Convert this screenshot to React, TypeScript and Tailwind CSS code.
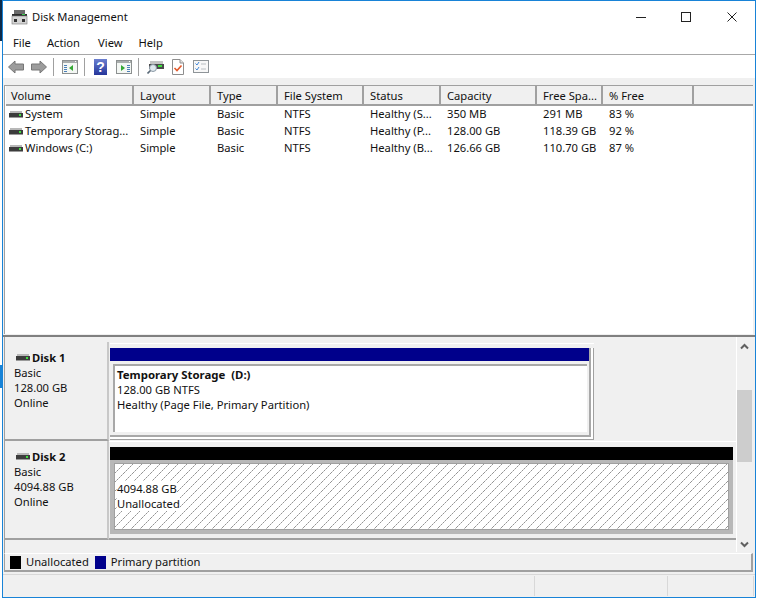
import type { ReactNode } from "react";

// small hard disk glyph used in the list and the disk labels
function DiskIcon({ className = "" }: { className?: string }) {
  return (
    <svg width="14" height="7" viewBox="0 0 14 7" className={className}>
      <rect x="1" y="0" width="12" height="2" fill="#b8b8b8" />
      <rect x="0" y="2" width="14" height="4" fill="#3c3c3c" />
      <rect x="0" y="6" width="14" height="1" fill="#9a9a9a" />
      <rect x="10" y="3" width="2" height="2" fill="#3ee03e" />
    </svg>
  );
}

function AppIcon() {
  return (
    <svg width="17" height="15" viewBox="0 0 17 15">
      <rect x="3" y="0" width="11" height="4" fill="#6a6a6a" />
      <rect x="1" y="4" width="15" height="2" fill="#2c2c2c" />
      <rect x="11" y="4" width="3" height="1" fill="#35d04a" />
      <rect x="1" y="6" width="15" height="8" fill="#d4d4d4" stroke="#777" strokeWidth="0.6" />
      <rect x="3" y="9" width="3" height="3" fill="#333" />
      <rect x="11" y="9" width="3" height="3" fill="#333" />
    </svg>
  );
}

function ArrowIcon({ flip = false }: { flip?: boolean }) {
  return (
    <svg width="16" height="14" viewBox="0 0 16 14" className={flip ? "-scale-x-100" : ""}>
      <path d="M0.5 7 L7 1 V4 H15.5 V10 H7 V13 Z" fill="#9c9c9c" stroke="#777" />
    </svg>
  );
}

function PaneIcon({ right = false }: { right?: boolean }) {
  return (
    <svg width="16" height="14" viewBox="0 0 16 14">
      <rect x="0.5" y="0.5" width="15" height="13" fill="#f4f7f4" stroke="#8c9090" />
      <rect x="1" y="1" width="14" height="2" fill="#a9adad" />
      <rect x="13" y="1" width="1" height="1" fill="#fff" />
      <rect x={right ? 11 : 2} y="5" width="3" height="1" fill="#4a7fb8" />
      <rect x={right ? 11 : 2} y="7" width="3" height="1" fill="#4a7fb8" />
      <rect x={right ? 11 : 2} y="9" width="3" height="1" fill="#4a7fb8" />
      <rect x={right ? 11 : 2} y="11" width="3" height="1" fill="#4a7fb8" />
      <path d={right ? "M5 5 L9 8 L5 11 Z" : "M11 5 L7 8 L11 11 Z"} fill="#35a835" />
    </svg>
  );
}

function HelpIcon() {
  return (
    <div className="flex h-[16px] w-[13px] items-center justify-center bg-gradient-to-b from-[#6c7fd0] to-[#26349a] font-['Liberation_Sans',sans-serif] text-[14px] leading-none font-bold text-white">
      ?
    </div>
  );
}

function ScanIcon() {
  return (
    <svg width="17" height="15" viewBox="0 0 17 15">
      <rect x="3" y="2" width="13" height="3" fill="#c4c4c4" />
      <rect x="2" y="5" width="15" height="5" fill="#4a4a4a" />
      <rect x="11" y="6" width="4" height="2" fill="#3ee03e" />
      <circle cx="6" cy="9" r="3.5" fill="#dfe8ee" stroke="#8a98a4" />
      <path d="M3.5 11.5 L0.5 14.5" stroke="#5a6a78" strokeWidth="1.6" />
    </svg>
  );
}

function TaskIcon() {
  return (
    <svg width="12" height="16" viewBox="0 0 12 16">
      <path d="M0.5 0.5 H8 L11.5 4 V15.5 H0.5 Z" fill="#fff" stroke="#8e8e8e" />
      <path d="M8 0.5 V4 H11.5" fill="#e4e4e4" stroke="#8e8e8e" />
      <path d="M2.5 9 L5 11.5 L9.5 6.5" fill="none" stroke="#e2592b" strokeWidth="1.6" />
    </svg>
  );
}

function ChecklistIcon() {
  return (
    <svg width="16" height="13" viewBox="0 0 16 13">
      <rect x="0.5" y="0.5" width="15" height="12" fill="#f7f7f7" stroke="#8e9498" />
      <path d="M2.5 3.5 L4 5 L6 2" fill="none" stroke="#3f86d8" />
      <path d="M2.5 8.5 L4 10 L6 7" fill="none" stroke="#3f86d8" />
      <path d="M8 4 H13 M8 9 H13" stroke="#b9bec2" />
    </svg>
  );
}

function Sep() {
  return <div className="h-[18px] w-px bg-[#a0a0a0]" />;
}

function HeaderCell({ label, width, first }: { label: string; width: string; first: boolean }) {
  return (
    <div className={`${width} flex h-full shrink-0 items-center border-r-2 border-b-2 border-[#a0a0a0] pt-[2px] ${first ? "pl-[5px]" : "pl-[6px]"} whitespace-nowrap`}>
      {label}
    </div>
  );
}

const rows = [
  ["System", "Simple", "Basic", "NTFS", "Healthy (S...", "350 MB", "291 MB", "83 %"],
  ["Temporary Storag...", "Simple", "Basic", "NTFS", "Healthy (P...", "128.00 GB", "118.39 GB", "92 %"],
  ["Windows (C:)", "Simple", "Basic", "NTFS", "Healthy (B...", "126.66 GB", "110.70 GB", "87 %"],
];

const cols = ["w-[128px]", "w-[77px]", "w-[67px]", "w-[86px]", "w-[77px]", "w-[96px]", "w-[66px]", "w-[91px]"];
const heads = ["Volume", "Layout", "Type", "File System", "Status", "Capacity", "Free Spa...", "% Free"];

function DiskLabel({ name, size }: { name: string; size: string }) {
  return (
    <div className="h-[99px] w-[104px] shrink-0 border-r-2 border-b-2 border-r-[#c8c8c8] border-b-[#a0a0a0] pt-[8px] pl-[9px] leading-[15px]">
      <div className="ml-[2px] flex items-center gap-[2px] font-bold">
        <DiskIcon />
        <span>{name}</span>
      </div>
      <div>Basic</div>
      <div>{size}</div>
      <div>Online</div>
    </div>
  );
}

function LegendSwatch({ color, children }: { color: string; children: ReactNode }) {
  return (
    <div className="flex items-center gap-[5px]">
      <div className={`h-[13px] w-[11px] ${color}`} />
      <span>{children}</span>
    </div>
  );
}

export default function App() {
  return (
    <div className="flex h-[598px] w-[757px] bg-white font-['Noto_Sans',sans-serif] text-[11.2px] text-[#111]">
      {/* desktop showing behind the window */}
      <div className="flex w-[2px] shrink-0 flex-col">
        <div className="h-[41px] bg-[#0c2a4a]" />
        <div className="h-[324px]" />
        <div className="h-[23px] bg-[#1883d7]" />
      </div>

      <div className="flex h-full w-[754px] shrink-0 flex-col overflow-hidden border border-[#1883d7] bg-[#f0f0f0]">
        {/* Title bar */}
        <div className="flex h-[32px] shrink-0 items-center bg-white pl-[8px]">
          <AppIcon />
          <span className="ml-[4px]">Disk Management</span>
          <div className="ml-auto flex items-center pr-[18px]">
            <div className="h-px w-[10px] bg-[#222]" />
            <div className="ml-[35px] h-[10px] w-[10px] border border-[#222]" />
            <svg width="10" height="10" viewBox="0 0 10 10" className="ml-[36px]">
              <path d="M0.5 0.5 L9.5 9.5 M9.5 0.5 L0.5 9.5" stroke="#222" />
            </svg>
          </div>
        </div>

        {/* Menu bar */}
        <div className="flex h-[22px] shrink-0 items-center gap-[16px] border-b border-[#a8a8a8] bg-white pl-[10px]">
          <span>File</span>
          <span className="mr-[2px]">Action</span>
          <span>View</span>
          <span>Help</span>
        </div>

        {/* Toolbar */}
        <div className="flex h-[23px] shrink-0 items-center bg-white pl-[5px]">
          <ArrowIcon />
          <div className="ml-[7px]"><ArrowIcon flip /></div>
          <div className="ml-[6px]"><Sep /></div>
          <div className="ml-[8px]"><PaneIcon /></div>
          <div className="ml-[6px]"><Sep /></div>
          <div className="ml-[9px]"><HelpIcon /></div>
          <div className="ml-[9px]"><PaneIcon right /></div>
          <div className="ml-[6px]"><Sep /></div>
          <div className="ml-[8px]"><ScanIcon /></div>
          <div className="ml-[8px]"><TaskIcon /></div>
          <div className="ml-[9px]"><ChecklistIcon /></div>
        </div>

        {/* Volume list */}
        <div className="flex h-[256px] shrink-0 flex-col pt-[7px] pr-[2px] pl-[1px]">
          <div className="flex-1 border-t border-l border-[#a0a0a0] bg-white pl-px">
            <div className="flex h-[20px] bg-[#f0f0f0]">
              {heads.map((h, i) => (
                <HeaderCell key={h} label={h} width={cols[i]} first={i === 0} />
              ))}
              <div className="flex-1 border-b-2 border-[#a0a0a0]" />
            </div>
            <div>
              {rows.map((r) => (
                <div key={r[0]} className="flex h-[17px] items-center whitespace-nowrap">
                  {r.map((c, i) => (
                    <div key={i} className={`${cols[i]} flex shrink-0 items-center ${i === 0 ? "pl-[3px]" : "pl-[6px]"}`}>
                      {i === 0 && <DiskIcon className="mr-[2px] shrink-0" />}
                      {c}
                    </div>
                  ))}
                </div>
              ))}
            </div>
          </div>
        </div>

        {/* Splitter */}
        <div className="h-[3px] shrink-0 border-b-2 border-[#808080]" />

        {/* Disk map */}
        <div className="flex h-[216px] shrink-0 pr-[3px] pl-[1px]">
          <div className="flex w-[732px] shrink-0 flex-col border-l border-[#a0a0a0]">
            <div className="flex h-[104px] shrink-0 pt-[5px]">
              <DiskLabel name="Disk 1" size="128.00 GB" />
              <div className="flex-1 pt-px pl-px">
                <div className="w-[484px] border-t border-white pt-[4px]">
                  <div className="h-[92px] border-r border-b border-[#a0a0a0]">
                    <div className="h-full border-r-2 border-b-2 border-white">
                      <div className="h-full border-r-2 border-b-2 border-[#a8a8a8]">
                        <div className="h-[13px] bg-[#00008b]" />
                        <div className="mt-[3px] ml-[3px] h-[68px] w-[474px] border-t-2 border-l-2 border-[#a8a8a8] bg-white pt-px pl-[2px] leading-[15px]">
                          <div className="text-[11.4px] font-bold">Temporary Storage&nbsp; (D:)</div>
                          <div>128.00 GB NTFS</div>
                          <div>Healthy (Page File, Primary Partition)</div>
                        </div>
                      </div>
                    </div>
                  </div>
                </div>
              </div>
            </div>
            <div className="flex h-[99px] shrink-0">
              <DiskLabel name="Disk 2" size="4094.88 GB" />
              <div className="flex-1 border-t border-b-2 border-t-white border-b-[#a0a0a0] pt-[5px] pl-px">
                <div className="h-[13px] w-[623px] bg-black" />
                <div className="h-[74px] w-[623px] bg-[#b8b8b8] px-[4px] pt-[3px] pb-[4px]">
                  <div className="relative h-[67px] overflow-hidden border border-[#a0a0a0] bg-white pt-[17px] pl-[2px] leading-[15px]">
                    <svg width="620" height="67" className="absolute top-0 left-0" shapeRendering="crispEdges">
                      <defs>
                        <pattern id="hatch" width="9" height="9" patternUnits="userSpaceOnUse">
                          {[0, 1, 2, 3, 4, 5, 6, 7, 8].map((n) => (
                            <rect key={n} x={8 - n} y={n} width="1" height="1" fill={n % 2 ? "#c4c4c4" : "#949494"} />
                          ))}
                        </pattern>
                      </defs>
                      <rect width="620" height="67" fill="url(#hatch)" />
                    </svg>
                    <div className="relative w-fit bg-white">4094.88 GB</div>
                    <div className="relative w-fit bg-white">Unallocated</div>
                  </div>
                </div>
              </div>
            </div>
          </div>

          {/* Scrollbar */}
          <div className="flex h-[215px] w-[16px] shrink-0 flex-col border-l border-white">
            <div className="flex h-[53px] shrink-0 justify-center pt-[6px]">
              <svg width="9" height="7" viewBox="0 0 9 7">
                <path d="M1 5.5 L4.5 2 L8 5.5" fill="none" stroke="#606060" strokeWidth="2" />
              </svg>
            </div>
            <div className="h-[72px] shrink-0 bg-[#cdcdcd]" />
            <div className="mt-auto flex h-[11px] justify-center">
              <svg width="9" height="7" viewBox="0 0 9 7">
                <path d="M1 1.5 L4.5 5 L8 1.5" fill="none" stroke="#606060" strokeWidth="2" />
              </svg>
            </div>
          </div>
        </div>

        {/* Legend */}
        <div className="mr-[2px] ml-[1px] flex h-[19px] shrink-0 items-center gap-[6px] border-t border-r-2 border-b-2 border-l border-t-white border-r-[#a0a0a0] border-b-[#a0a0a0] border-l-[#a0a0a0] pl-[5px]">
          <LegendSwatch color="bg-black">Unallocated</LegendSwatch>
          <LegendSwatch color="bg-[#00008b]">Primary partition</LegendSwatch>
        </div>

        {/* Status bar */}
        <div className="mt-[2px] flex flex-1 justify-end border-t border-[#d8d8d8] pt-px pr-[1px] pb-px">
          <div className="mr-[132px] h-full w-px bg-[#d8d8d8]" />
          <div className="mr-[85px] h-full w-px bg-[#d8d8d8]" />
          <div className="h-full w-px bg-[#d8d8d8]" />
        </div>
      </div>
    </div>
  );
}
